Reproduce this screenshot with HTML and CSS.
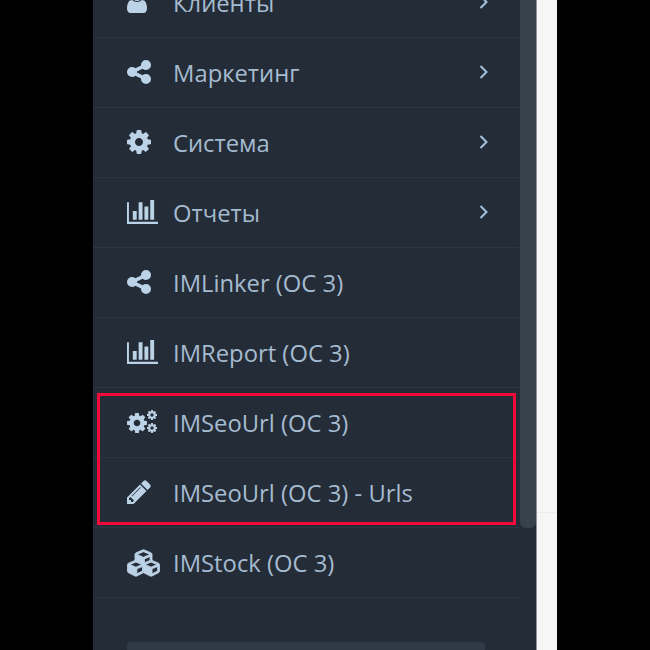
FILE: index.html
```html
<!DOCTYPE html>
<html lang="ru">
<head>
  <meta charset="UTF-8">
  <title>Меню</title>
  <link rel="stylesheet" href="styles.css">
</head>
<body>
  <svg class="icon-defs" width="0" height="0">
    <symbol id="i-user" viewBox="256 128 1280 1536"><path d="M1536 1399q0 109-62.500 187t-150.500 78h-854q-88 0-150.500-78t-62.500-187q0-85 8.500-160.500t31.500-151.500 58.500-130 94-88.500 134.500-34.500q131 128 313 128t313-128q76 0 134.500 34.500t94 88.500 58.500 130 31.500 151.500 8.500 160.500zm-256-887q0 159-112.500 271.500t-271.500 112.500-271.500-112.500-112.500-271.500 112.500-271.500 271.500-112.500 271.500 112.500 112.500 271.500z"/></symbol>
    <symbol id="i-share" viewBox="128 128 1536 1536"><path d="M1344 1024q133 0 226.500 93.500t93.500 226.500-93.500 226.500-226.500 93.500-226.500-93.500-93.500-226.500q0-12 2-34l-360-180q-92 86-218 86-133 0-226.500-93.500t-93.500-226.500 93.500-226.500 226.500-93.500q126 0 218 86l360-180q-2-22-2-34 0-133 93.500-226.500t226.500-93.500 226.500 93.500 93.500 226.500-93.500 226.500-226.500 93.500q-126 0-218-86l-360 180q2 22 2 34t-2 34l360 180q92-86 218-86z"/></symbol>
    <symbol id="i-cog" viewBox="128 128 1536 1536"><path fill-rule="evenodd" d="M1152 896q0-106-75-181t-181-75-181 75-75 181 75 181 181 75 181-75 75-181zm512-109v222q0 12-8 23t-20 13l-185 28q-19 54-39 91 35 50 107 138 10 12 10 25t-9 23q-27 37-99 108t-94 71q-12 0-26-9l-138-108q-44 23-91 38-16 136-29 186-7 28-36 28h-222q-14 0-24.500-8.500t-11.500-21.500l-28-184q-49-16-90-37l-141 107q-10 9-25 9-14 0-25-11-126-114-165-168-7-10-7-23 0-12 8-23 15-21 51-66.500t54-70.500q-27-50-41-99l-183-27q-13-2-21-12.500t-8-23.500v-222q0-12 8-23t19-13l186-28q14-46 39-92-40-57-107-138-10-12-10-24 0-10 9-23 26-36 98.500-107.500t94.500-71.500q13 0 26 10l138 107q44-23 91-38 16-136 29-186 7-28 36-28h222q14 0 24.500 8.500t11.500 21.500l28 184q49 16 90 37l142-107q9-9 24-9 13 0 25 10 129 119 165 170 7 8 7 22 0 12-8 23-15 21-51 66.500t-54 70.500q26 50 41 98l183 28q13 2 21 12.500t8 23.500z"/></symbol>
    <symbol id="i-chart" viewBox="0 256 2048 1408" preserveAspectRatio="none"><path d="M640 896v512h-256v-512h256zm384-512v1024h-256v-1024h256zm1024 1152v128h-2048v-1280h128v1152h1920zm-640-896v768h-256v-768h256zm384-384v1152h-256v-1152h256z"/></symbol>
    <symbol id="i-pencil" viewBox="128 128 1536 1536"><path fill-rule="evenodd" d="M491 1536l91-91-235-235-91 91v107h128v128h107zm523-928q0-22-22-22-10 0-17 7l-542 542q-7 7-7 17 0 22 22 22 10 0 17-7l542-542q7-7 7-17zm-54-192l416 416-832 832h-416v-416zm683 96q0 53-37 90l-166 166-416-416 166-165q36-38 90-38 53 0 91 38l235 234q37 39 37 91z"/></symbol>
    <symbol id="i-cogs" viewBox="0 0 31 24">
      <use href="#i-cog" x="0" y="3" width="20" height="20"/>
      <use href="#i-cog" x="20" y="0" width="10" height="10"/>
      <use href="#i-cog" x="20" y="13" width="10" height="10"/>
    </symbol>
    <symbol id="i-cubes" viewBox="-30 -30 2236 1852"><path class="cubes-shape" fill-rule="evenodd" d="M2176 1024v416q0 36-19 67t-52 47l-448 224q-25 14-57 14t-57-14l-448-224q-5-2-7-4-2 2-7 4l-448 224q-25 14-57 14t-57-14l-448-224q-33-16-52-47t-19-67v-416q0-38 21.500-70t56.500-48l434-186v-400q0-38 21.500-70t56.500-48l448-192q23-10 50-10t50 10l448 192q35 16 56.500 48t21.500 70v400l434 186q36 16 57 48t21 70zM640 1632l384-192v-314l-384 164v342zm-64-454l404-173-404-173-404 173zm1088 454l384-192v-314l-384 164v342zm-64-454l404-173-404-173-404 173zm-448-293l384-165v-266l-384 164v267zm-64-379l441-189-441-189-441 189z"/></symbol>
    <symbol id="i-chevron" viewBox="0 0 9 14"><path d="M1.500 1l6 6-6 6" fill="none" stroke="currentColor" stroke-width="2"/></symbol>
  </svg>

  <div class="screen">
    <nav class="sidebar">
      <ul class="menu">
        <li class="menu-item">
          <svg class="menu-icon icon-user"><use href="#i-user"/></svg>
          <span>Клиенты</span>
          <svg class="chevron"><use href="#i-chevron"/></svg>
        </li>
        <li class="menu-item">
          <svg class="menu-icon"><use href="#i-share"/></svg>
          <span>Маркетинг</span>
          <svg class="chevron"><use href="#i-chevron"/></svg>
        </li>
        <li class="menu-item">
          <svg class="menu-icon"><use href="#i-cog"/></svg>
          <span>Система</span>
          <svg class="chevron"><use href="#i-chevron"/></svg>
        </li>
        <li class="menu-item">
          <svg class="menu-icon icon-wide"><use href="#i-chart"/></svg>
          <span>Отчеты</span>
          <svg class="chevron"><use href="#i-chevron"/></svg>
        </li>
        <li class="menu-item">
          <svg class="menu-icon"><use href="#i-share"/></svg>
          <span>IMLinker (OC 3)</span>
        </li>
        <li class="menu-item">
          <svg class="menu-icon icon-wide"><use href="#i-chart"/></svg>
          <span>IMReport (OC 3)</span>
        </li>
        <li class="menu-item">
          <svg class="menu-icon icon-wide"><use href="#i-cogs"/></svg>
          <span>IMSeoUrl (OC 3)</span>
        </li>
        <li class="menu-item">
          <svg class="menu-icon"><use href="#i-pencil"/></svg>
          <span>IMSeoUrl (OC 3) - Urls</span>
        </li>
        <li class="menu-item">
          <svg class="menu-icon icon-cubes"><use href="#i-cubes"/></svg>
          <span>IMStock (OC 3)</span>
        </li>
      </ul>
      <div class="stats-box"></div>
      <div class="scroll-thumb"></div>
      <div class="highlight"></div>
    </nav>
    <div class="content">
      <div class="content-top"></div>
    </div>
  </div>
</body>
</html>
```

FILE: styles.css
```css
body {
  margin: 0;
  background: #000;
  font-family: "Open Sans", "Liberation Sans", sans-serif;
}
.icon-defs {
  display: block;
  height: 0;
}
symbol, .menu-icon {
  fill: currentColor;
}
.cubes-shape {
  stroke: currentColor;
  stroke-width: 60;
}
.screen {
  display: flex;
  width: 464px;
  height: 650px;
  margin-left: 93px;
  overflow: hidden;
}
/* Боковое меню */
.sidebar {
  position: relative;
  width: 443px;
  background: #242c37;
  border-right: 1px solid #8c939b;
}
.menu {
  list-style: none;
  width: 426px;
  margin: -32px 0 0;
  padding: 0;
}
.menu-item {
  display: flex;
  align-items: center;
  height: 69px;
  padding-left: 34px;
  border-bottom: 1px solid #2d3641;
  color: #a5bbd0;
  font-size: 23.8px;
}
.menu-item span {
  margin-top: 1px;
}
.menu-icon {
  flex: none;
  width: 24px;
  height: 24px;
  margin-top: -2px;
  margin-right: 22px;
  color: #bcd2e6;
}
.icon-user {
  width: 20px;
  margin-top: -3px;
  margin-right: 26px;
}
.icon-wide {
  width: 31px;
  margin-right: 15px;
}
.icon-cubes {
  width: 33px;
  height: 28px;
  margin-top: 0;
  margin-right: 13px;
}
.chevron {
  width: 9px;
  height: 14px;
  margin-left: auto;
  margin-right: 31px;
  margin-top: -2px;
  color: #a5c3de;
}
.stats-box {
  width: 358px;
  height: 40px;
  margin: 44px 0 0 34px;
  border-radius: 4px;
  background: #303a47;
}
.scroll-thumb {
  position: absolute;
  top: -10px;
  right: 0;
  width: 16px;
  height: 538px;
  border-radius: 0 0 6px 6px;
  background: #37414c;
}
.highlight {
  position: absolute;
  left: 4px;
  top: 393px;
  width: 413px;
  height: 126px;
  border: 3px solid #f5083a;
}
/* Светлая полоса контента справа */
.content {
  flex: 1;
  background: #f6f6f6;
}
.content-top {
  height: 512px;
  border-bottom: 1px solid #ebebeb;
}
```
